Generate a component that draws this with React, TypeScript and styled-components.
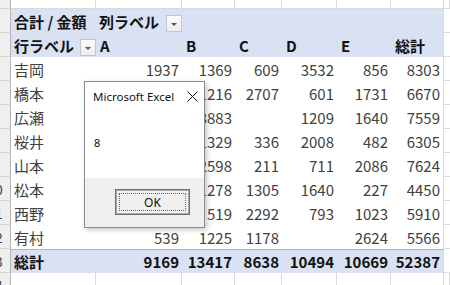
import React from "react";
import styled, { createGlobalStyle, css } from "styled-components";

const Global = createGlobalStyle`
  html, body { margin: 0; padding: 0; background: #fff; overflow: hidden; }
  body { font-family: "Noto Sans CJK JP", "Noto Sans", sans-serif; }
`;

const COLS = "11px 85px 86px 53px 47px 55px 54px 53px 1fr";
const GRID = "#dadada";
const BLUE = "#d9e1f2";

const Sheet = styled.div`
  position: relative;
  width: 450px;
  height: 285px;
  overflow: hidden;
  display: flex;
  flex-direction: column;
`;

const Row = styled.div<{ $h: number }>`
  display: grid;
  grid-template-columns: ${COLS};
  height: ${(p) => p.$h}px;
  flex-shrink: 0;
`;

const RowHead = styled.div`
  box-sizing: border-box;
  background: #efefef;
  border-right: 1px solid #b4b4b4;
  border-bottom: 1px solid #d4d4d4;
  overflow: hidden;
  display: flex;
  justify-content: flex-end;
  align-items: center;
  color: #444;
  font-size: 14px;
  font-family: "Noto Sans CJK JP", sans-serif;
`;

const RowNum = styled.span`
  flex-shrink: 0;
  width: 30px;
  text-align: center;
`;

type Kind = "plain" | "head" | "body" | "total" | "edge";

const Cell = styled.div<{ $kind: Kind; $right?: boolean; $bold?: boolean; $last?: boolean }>`
  box-sizing: border-box;
  display: flex;
  align-items: center;
  justify-content: ${(p) => (p.$right ? "flex-end" : "flex-start")};
  padding: ${(p) => (p.$right ? "0 3px 0 0" : "0 0 0 4px")};
  font-size: 15px;
  white-space: nowrap;
  overflow: hidden;
  font-weight: ${(p) => (p.$bold ? 700 : 400)};
  color: ${(p) => (p.$bold ? "#111" : "#404040")};
  ${(p) => p.$last && css`border-right: 1px solid ${GRID};`}
  ${(p) =>
    p.$kind === "plain" &&
    css`
      background: #fff;
      border-right: 1px solid ${GRID};
      border-bottom: 1px solid ${GRID};
    `}
  ${(p) =>
    p.$kind === "edge" &&
    css`
      background: #fff;
      border-bottom: 1px solid ${GRID};
    `}
  ${(p) => p.$kind === "head" && css`background: ${BLUE};`}
  ${(p) => p.$kind === "body" && css`background: #fff;`}
  ${(p) =>
    p.$kind === "total" &&
    css`
      background: ${BLUE};
      border-top: 1px solid #9fb6e0;
    `}
`;

const LabelCell = styled(Cell)`
  justify-content: space-between;
  padding-left: 3px;
  padding-right: 0;
`;

const DropBtn = styled.div`
  box-sizing: border-box;
  width: 16px;
  height: 17px;
  align-self: flex-end;
  margin-bottom: 1px;
  background: linear-gradient(#fbfbfb, #eeeeee);
  border: 1px solid #c6c6c6;
  display: flex;
  align-items: center;
  justify-content: center;
  &::after {
    content: "";
    width: 0;
    height: 0;
    border-left: 3px solid transparent;
    border-right: 3px solid transparent;
    border-top: 3px solid #555;
    margin-top: 1px;
  }
`;

const Dialog = styled.div`
  position: absolute;
  left: 84px;
  top: 81px;
  width: 121px;
  height: 147px;
  box-sizing: border-box;
  border: 1px solid #8c8c8c;
  background: #fff;
  box-shadow: 2px 2px 5px rgba(0, 0, 0, 0.22);
  display: flex;
  flex-direction: column;
  font-family: "Segoe UI", "Noto Sans", sans-serif;
`;

const TitleBar = styled.div`
  height: 28px;
  display: flex;
  align-items: center;
  justify-content: space-between;
  padding: 0 6px 0 8px;
  font-size: 11.5px;
  color: #111;
`;

const Close = styled.svg`
  width: 11px;
  height: 11px;
  flex-shrink: 0;
`;

const Body = styled.div`
  flex: 1;
  padding: 25px 0 0 9px;
  font-size: 11px;
  color: #111;
`;

const Footer = styled.div`
  height: 49px;
  background: #f0f0f0;
  display: flex;
  justify-content: flex-end;
  align-items: flex-start;
  padding: 11px 14px 0 0;
  box-sizing: border-box;
`;

const OkButton = styled.div`
  position: relative;
  box-sizing: border-box;
  width: 75px;
  height: 26px;
  border: 1px solid #6f6f6f;
  box-shadow: inset 0 0 0 1px #a9a9a9;
  background: #efefef;
  display: flex;
  align-items: center;
  justify-content: center;
  font-size: 12px;
  color: #111;
  &::after {
    content: "";
    position: absolute;
    inset: 3px;
    border: 1px dotted #666;
  }
`;

const names = ["吉岡", "橋本", "広瀬", "桜井", "山本", "松本", "西野", "有村"];
const data: (number | null)[][] = [
  [1937, 1369, 609, 3532, 856, 8303],
  [415, 1216, 2707, 601, 1731, 6670],
  [827, 3883, null, 1209, 1640, 7559],
  [2150, 1329, 336, 2008, 482, 6305],
  [2018, 2598, 211, 711, 2086, 7624],
  [null, 1278, 1305, 1640, 227, 4450],
  [1283, 519, 2292, 793, 1023, 5910],
  [539, 1225, 1178, null, 2624, 5566],
];
const totals = [9169, 13417, 8638, 10494, 10669, 52387];
const colHeads = ["A", "B", "C", "D", "E", "総計"];

const PlainRow = ({ n, h }: { n: number; h: number }) => (
  <Row $h={h}>
    <RowHead>
      <RowNum>{n}</RowNum>
    </RowHead>
    {Array.from({ length: 7 }).map((_, i) => (
      <Cell key={i} $kind="plain" />
    ))}
    <Cell $kind="plain" />
  </Row>
);

export default function App() {
  return (
    <>
      <Global />
      <Sheet>
        <PlainRow n={2} h={9} />
        <Row $h={24}>
          <RowHead>
            <RowNum>3</RowNum>
          </RowHead>
          <Cell $kind="head" $bold style={{ paddingLeft: 3 }}>
            合計 / 金額
          </Cell>
          <LabelCell $kind="head" $bold>
            列ラベル
            <DropBtn />
          </LabelCell>
          {[0, 1, 2, 3, 4].map((i) => (
            <Cell key={i} $kind="head" $last={i === 4} />
          ))}
          <Cell $kind="edge" />
        </Row>
        <Row $h={24}>
          <RowHead>
            <RowNum>4</RowNum>
          </RowHead>
          <LabelCell $kind="head" $bold>
            行ラベル
            <DropBtn />
          </LabelCell>
          {colHeads.map((c, i) => (
            <Cell key={c} $kind="head" $bold $last={i === 5}>
              {c}
            </Cell>
          ))}
          <Cell $kind="edge" />
        </Row>
        {names.map((name, r) => (
          <Row $h={24} key={name}>
            <RowHead>
              <RowNum>{r + 5}</RowNum>
            </RowHead>
            <Cell $kind="body" style={{ paddingLeft: 3 }}>
              {name}
            </Cell>
            {data[r].map((v, i) => (
              <Cell key={i} $kind="body" $right $last={i === 5}>
                {v ?? ""}
              </Cell>
            ))}
            <Cell $kind="edge" />
          </Row>
        ))}
        <Row $h={24}>
          <RowHead>
            <RowNum>13</RowNum>
          </RowHead>
          <Cell $kind="total" $bold style={{ paddingLeft: 3 }}>
            総計
          </Cell>
          {totals.map((v, i) => (
            <Cell key={i} $kind="total" $bold $right $last={i === 5}>
              {v}
            </Cell>
          ))}
          <Cell $kind="edge" />
        </Row>
        <PlainRow n={14} h={24} />

        <Dialog>
          <TitleBar>
            <span>Microsoft Excel</span>
            <Close viewBox="0 0 11 11">
              <path d="M0.5 0.5 L10.5 10.5 M10.5 0.5 L0.5 10.5" stroke="#111" strokeWidth="1" fill="none" />
            </Close>
          </TitleBar>
          <Body>8</Body>
          <Footer>
            <OkButton>OK</OkButton>
          </Footer>
        </Dialog>
      </Sheet>
    </>
  );
}
